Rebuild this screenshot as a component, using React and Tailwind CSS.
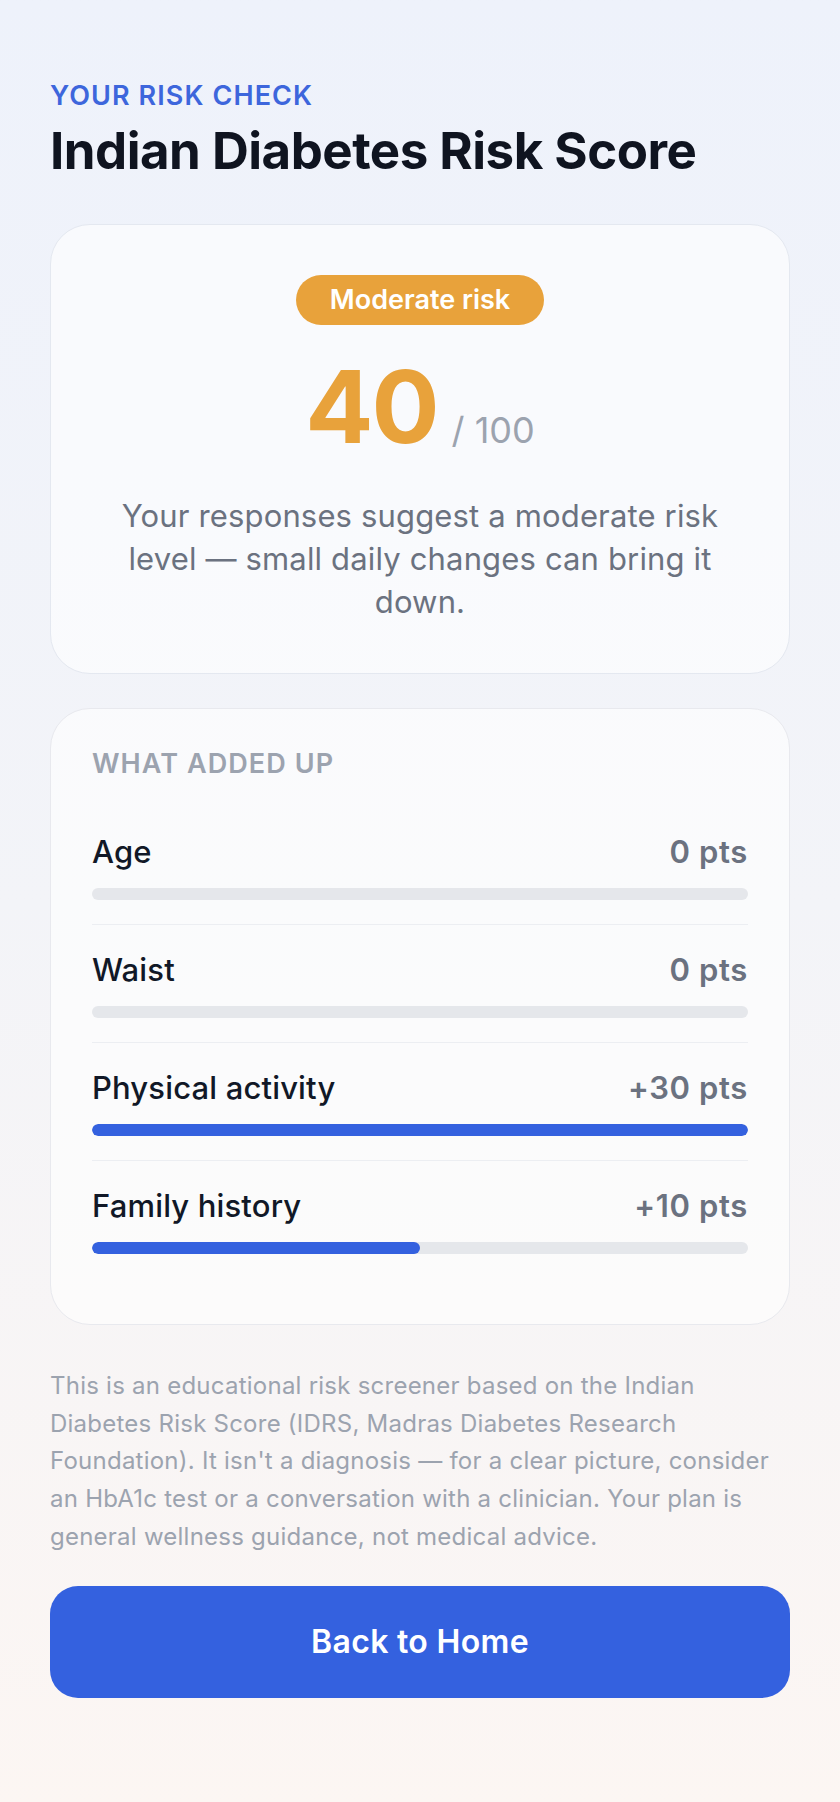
import React from 'react';

const factors = [
  { label: 'Age', points: 0, fill: 0 },
  { label: 'Waist', points: 0, fill: 0 },
  { label: 'Physical activity', points: 30, fill: 100 },
  { label: 'Family history', points: 10, fill: 50 }
];

const App = () => {
  return (
    <div className="min-h-screen bg-gradient-to-b from-[#eef2fb] via-[#f3f4f8] to-[#fcf6f3] px-[50px] pt-[78px] pb-[105px] font-['Inter',sans-serif]">
      <div className="text-[27px] font-semibold uppercase leading-[36px] tracking-[0.04em] text-[#3d66dc]">
        Your risk check
      </div>
      <h1 className="mt-[8px] text-[51px] font-bold leading-[58px] tracking-[-0.01em] text-[#0f1420]">
        Indian Diabetes Risk Score
      </h1>

      <div className="mt-[44px] flex flex-col items-center rounded-[40px] border border-[#e4e8f0] bg-white/60 px-[48px] pt-[50px] pb-[50px] text-center">
        <span className="flex h-[50px] items-center rounded-full bg-[#e8a23b] px-[34px] text-[27px] font-semibold text-white">
          Moderate risk
        </span>
        <div className="mt-[32px] flex items-baseline">
          <span className="text-[101px] font-bold leading-[98px] tracking-[-0.02em] text-[#e8a23b]">40</span>
          <span className="ml-[14px] text-[36px] text-[#9ca3af]">/ 100</span>
        </div>
        <p className="mt-[37px] text-[31px] leading-[43px] tracking-[0.005em] text-[#6b7280]">
          Your responses suggest a moderate risk level — small daily changes can bring it down.
        </p>
      </div>

      <div className="mt-[34px] rounded-[40px] border border-[#e8e9ee] bg-white/60 px-[41px] pt-[37px] pb-[46px]">
        <div className="mb-[25px] text-[27px] font-semibold uppercase leading-[36px] tracking-[0.04em] text-[#9ca3af]">
          What added up
        </div>
        {factors.map((f, i) => (
          <div
            key={f.label}
            className={`py-[24px] ${i > 0 ? 'border-t border-[#eceef2]' : ''}`}
          >
            <div className="flex items-center justify-between text-[31px] leading-[41px] tracking-[0.005em]">
              <span className="font-medium text-[#111827]">{f.label}</span>
              <span className="font-semibold tracking-[0.02em] text-[#6b7280]">
                {f.points > 0 ? `+${f.points}` : f.points} pts
              </span>
            </div>
            <div className="mt-[16px] h-[12px] overflow-hidden rounded-full bg-[#e5e7eb]">
              <div className="h-full rounded-full bg-[#3461df]" style={{ width: `${f.fill}%` }} />
            </div>
          </div>
        ))}
      </div>

      <p className="mt-[42px] text-[24px] leading-[37.7px] tracking-[0.01em] text-[#9ca3af]">
        This is an educational risk screener based on the Indian Diabetes Risk Score (IDRS, Madras
        Diabetes Research Foundation). It isn't a diagnosis — for a clear picture, consider an HbA1c
        test or a conversation with a clinician. Your plan is general wellness guidance, not medical
        advice.
      </p>

      <button className="mt-[30px] h-[112px] w-full rounded-[28px] bg-[#3461df] text-[32px] font-semibold tracking-[0.01em] text-white">
        Back to Home
      </button>
    </div>
  );
};

export default App;
